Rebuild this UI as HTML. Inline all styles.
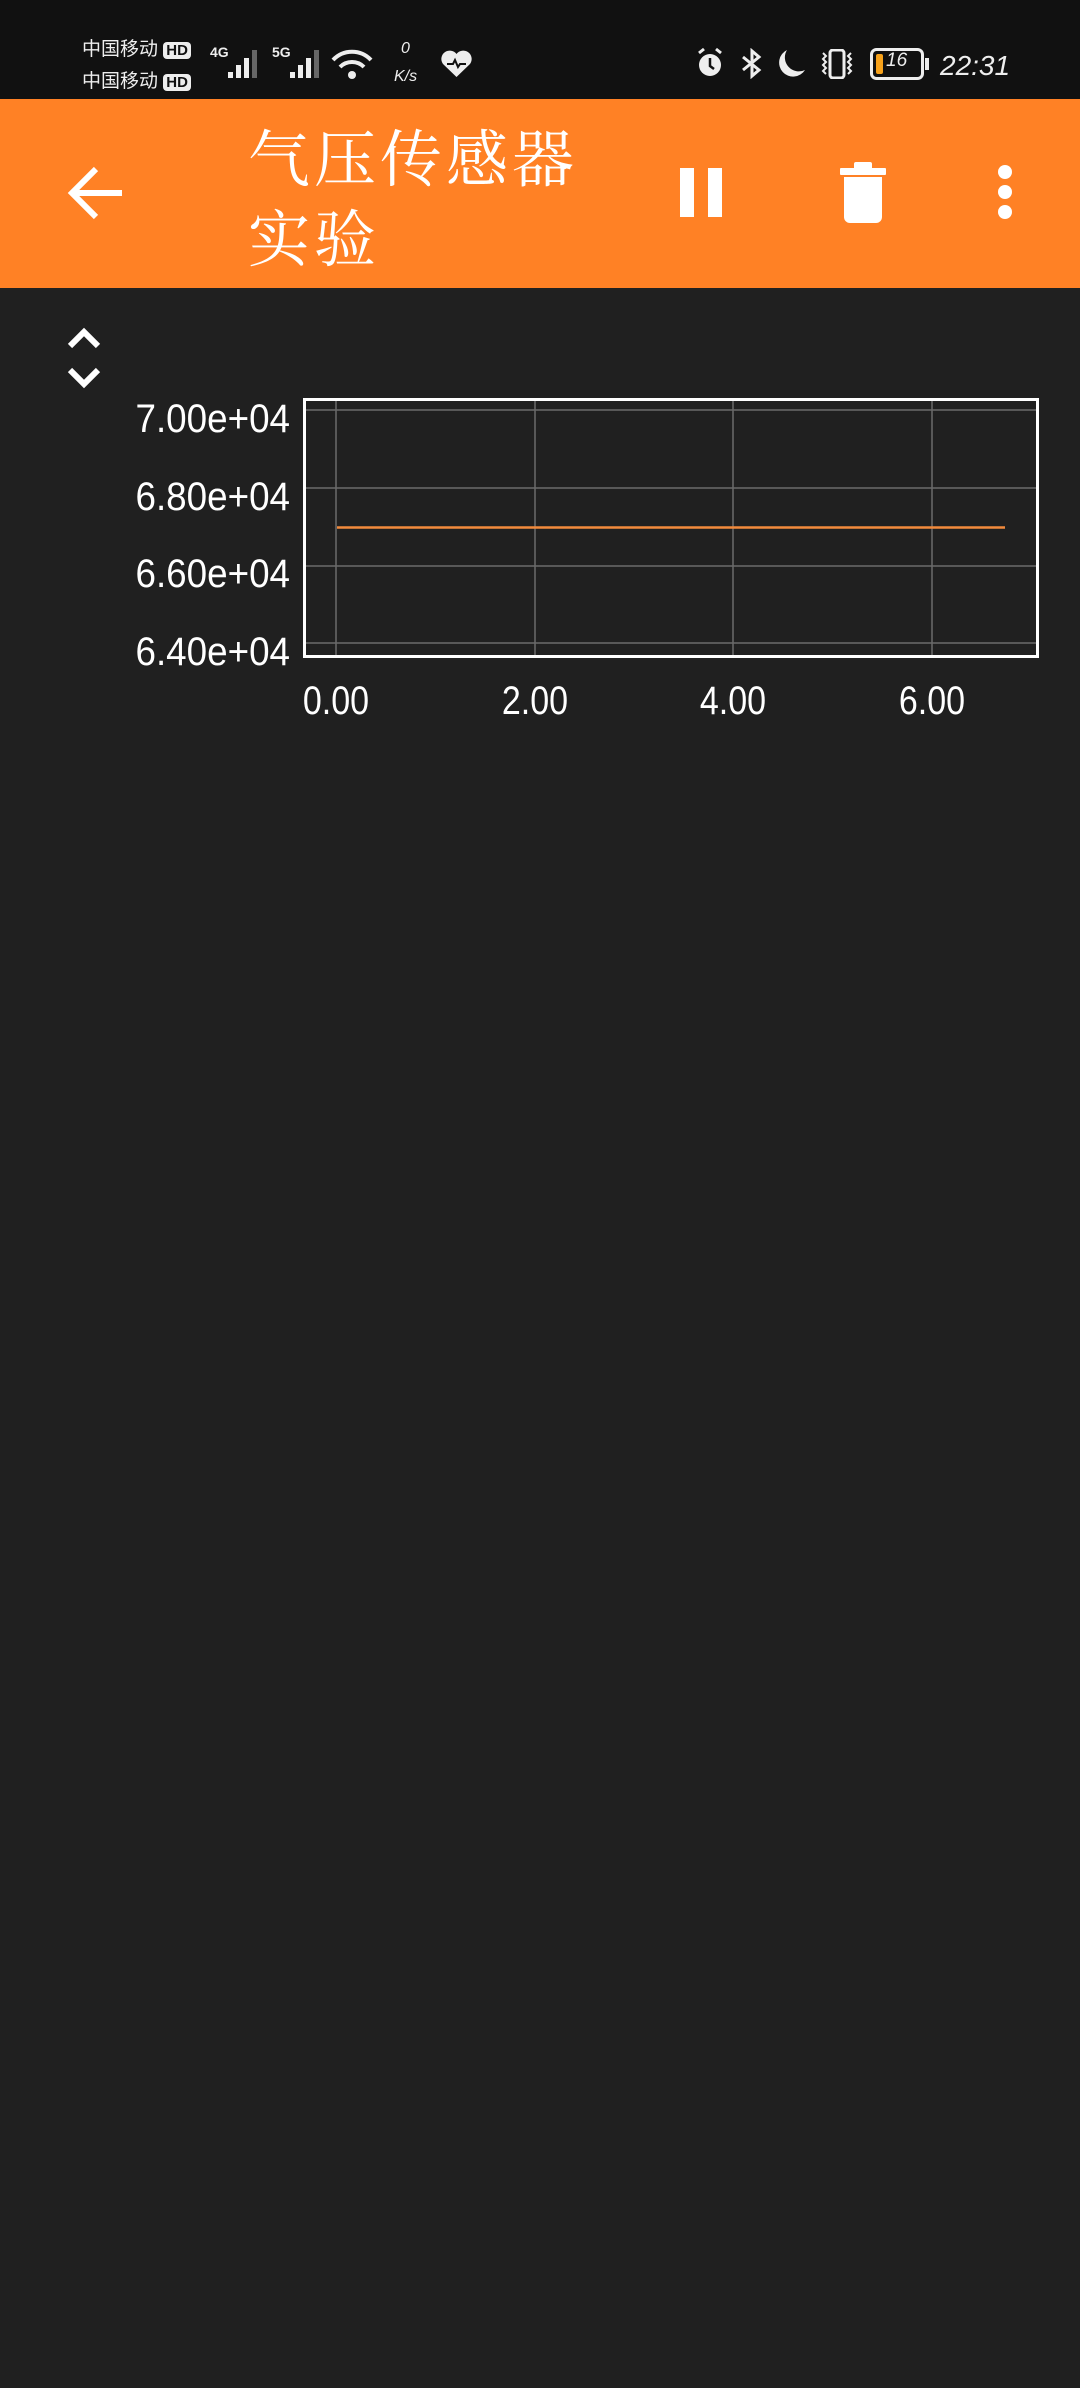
<!DOCTYPE html>
<html><head><meta charset="utf-8"><style>
*{margin:0;padding:0;box-sizing:border-box}
body{width:1080px;height:2388px;background:#202020;position:relative;overflow:hidden;font-family:"Liberation Sans","Noto Sans CJK SC",sans-serif;color:#fff}
.a{position:absolute}
#sb{left:0;top:0;width:1080px;height:99px;background:#111}
#hd{left:0;top:99px;width:1080px;height:189px;background:#ff8125}
.st{font-size:19px;color:#eee;white-space:nowrap}
.hdb{background:#eee;color:#111;font-size:15px;font-weight:bold;border-radius:4px;padding:0 3px;line-height:19px}
.yl{font-size:40px;width:220px;text-align:right;transform:scaleX(.92);transform-origin:right center;line-height:40px}
.xl{font-size:40px;width:120px;text-align:center;transform:scaleX(.85);line-height:40px}
.t{font-family:"Noto Serif CJK SC","Liberation Serif",serif;font-size:62px;line-height:80px;letter-spacing:4px}
</style></head><body>
<div id="sb" class="a">
 <div class="a st" style="left:82px;top:34px">中国移动 <span class="hdb">HD</span></div>
 <div class="a st" style="left:82px;top:66px">中国移动 <span class="hdb">HD</span></div>
 <div class="a st" style="left:210px;top:44px;font-size:14px;font-weight:bold">4G</div>
 <svg class="a" style="left:228px;top:48px" width="34" height="31"><rect x="0" y="24" width="5" height="6" fill="#eee"/><rect x="8" y="17" width="5" height="13" fill="#eee"/><rect x="16" y="10" width="5" height="20" fill="#eee"/><rect x="24" y="2" width="5" height="28" fill="#666"/></svg>
 <div class="a st" style="left:272px;top:44px;font-size:14px;font-weight:bold">5G</div>
 <svg class="a" style="left:290px;top:48px" width="34" height="31"><rect x="0" y="24" width="5" height="6" fill="#eee"/><rect x="8" y="17" width="5" height="13" fill="#eee"/><rect x="16" y="10" width="5" height="20" fill="#eee"/><rect x="24" y="2" width="5" height="28" fill="#666"/></svg>
 <svg class="a" style="left:330px;top:48px" width="44" height="32"><path d="M3 12 A26 26 0 0 1 41 12" stroke="#eee" stroke-width="4" fill="none"/><path d="M10 19 A17 17 0 0 1 34 19" stroke="#eee" stroke-width="4" fill="none"/><circle cx="22" cy="27" r="4" fill="#eee"/></svg>
 <div class="a st" style="left:401px;top:40px;font-size:16px;font-style:italic">0</div>
 <div class="a st" style="left:394px;top:68px;font-size:16px;font-style:italic">K/s</div>
 <svg class="a" style="left:440px;top:50px" width="33" height="28"><path d="M16.5 27 L3 14 A8 8 0 0 1 16.5 4 A8 8 0 0 1 30 14 Z" fill="#eee"/><path d="M7 14h6l2-4 3 7 2-3h6" stroke="#111" stroke-width="2" fill="none"/></svg>
 <svg class="a" style="left:697px;top:47px" width="26" height="31"><circle cx="13" cy="18" r="11" fill="#eee"/><path d="M13 11v8l4 3" stroke="#111" stroke-width="2.5" fill="none"/><path d="M2 6l5-4M24 6l-5-4" stroke="#eee" stroke-width="3"/></svg>
 <svg class="a" style="left:740px;top:48px" width="24" height="31"><path d="M3 9l16 13-7 6V3l7 6L3 22" stroke="#eee" stroke-width="3" fill="none"/></svg>
 <svg class="a" style="left:775px;top:48px" width="32" height="31"><path d="M12 2 A14 14 0 1 0 30 22 A14 14 0 0 1 12 2Z" fill="#eee"/></svg>
 <svg class="a" style="left:818px;top:49px" width="38" height="30"><rect x="12" y="1" width="14" height="28" rx="3" stroke="#eee" stroke-width="3" fill="none"/><path d="M5 4l3 3-3 3 3 3-3 3 3 3-3 3 3 3M33 4l-3 3 3 3-3 3 3 3-3 3 3 3-3 3" stroke="#eee" stroke-width="2" fill="none"/></svg>
 <svg class="a" style="left:870px;top:48px" width="60" height="32"><rect x="1.5" y="1.5" width="51" height="29" rx="5" stroke="#eee" stroke-width="3" fill="none"/><rect x="6" y="6" width="7" height="20" rx="2" fill="#f7a21b"/><rect x="55" y="10" width="4" height="12" fill="#eee"/></svg>
 <div class="a st" style="left:886px;top:50px;font-size:19px;font-style:italic">16</div>
 <div class="a st" style="left:940px;top:50px;font-size:28px;font-style:italic">22:31</div>
</div>
<div id="hd" class="a">
 <svg class="a" style="left:66px;top:66px" width="60" height="56"><path d="M56 28H8M30 4L6 28l24 24" stroke="#fff" stroke-width="6" fill="none"/></svg>
 <div class="a t" style="left:248px;top:16px">气压传感器<br>实验</div>
 <div class="a" style="left:680px;top:69px;width:14px;height:49px;background:#fff"></div>
 <div class="a" style="left:708px;top:69px;width:14px;height:49px;background:#fff"></div>
 <svg class="a" style="left:838px;top:61px" width="52" height="64"><rect x="2" y="8" width="46" height="7" rx="1" fill="#fff"/><rect x="16" y="2" width="18" height="8" rx="2" fill="#fff"/><path d="M6 17h38v40a6 6 0 0 1-6 6H12a6 6 0 0 1-6-6z" fill="#fff"/></svg>
 <div class="a" style="left:998px;top:66px;width:14px;height:14px;border-radius:50%;background:#fff"></div>
 <div class="a" style="left:998px;top:86px;width:14px;height:14px;border-radius:50%;background:#fff"></div>
 <div class="a" style="left:998px;top:106px;width:14px;height:14px;border-radius:50%;background:#fff"></div>
</div>
<svg class="a" style="left:66px;top:326px" width="36" height="66"><path d="M4 20l14-14 14 14" stroke="#fff" stroke-width="6" fill="none"/><path d="M4 44l14 14 14-14" stroke="#fff" stroke-width="6" fill="none"/></svg>
<svg class="a" style="left:0;top:0" width="1080" height="700">
 <g stroke="#6a6a6a" stroke-width="1.5">
  <line x1="305" y1="410" x2="1037" y2="410"/><line x1="305" y1="488" x2="1037" y2="488"/><line x1="305" y1="566" x2="1037" y2="566"/><line x1="305" y1="643" x2="1037" y2="643"/>
  <line x1="336" y1="400" x2="336" y2="656"/><line x1="535" y1="400" x2="535" y2="656"/><line x1="733" y1="400" x2="733" y2="656"/><line x1="932" y1="400" x2="932" y2="656"/>
 </g>
 <line x1="337" y1="527.5" x2="1005" y2="527.5" stroke="#f28a3c" stroke-width="2.5"/>
 <rect x="304.5" y="399.5" width="733" height="257" fill="none" stroke="#fff" stroke-width="3"/>
</svg>
<div class="a yl" style="left:70px;top:399px">7.00e+04</div>
<div class="a yl" style="left:70px;top:477px">6.80e+04</div>
<div class="a yl" style="left:70px;top:554px">6.60e+04</div>
<div class="a yl" style="left:70px;top:632px">6.40e+04</div>
<div class="a xl" style="left:276px;top:681px">0.00</div>
<div class="a xl" style="left:475px;top:681px">2.00</div>
<div class="a xl" style="left:673px;top:681px">4.00</div>
<div class="a xl" style="left:872px;top:681px">6.00</div>
</body></html>
